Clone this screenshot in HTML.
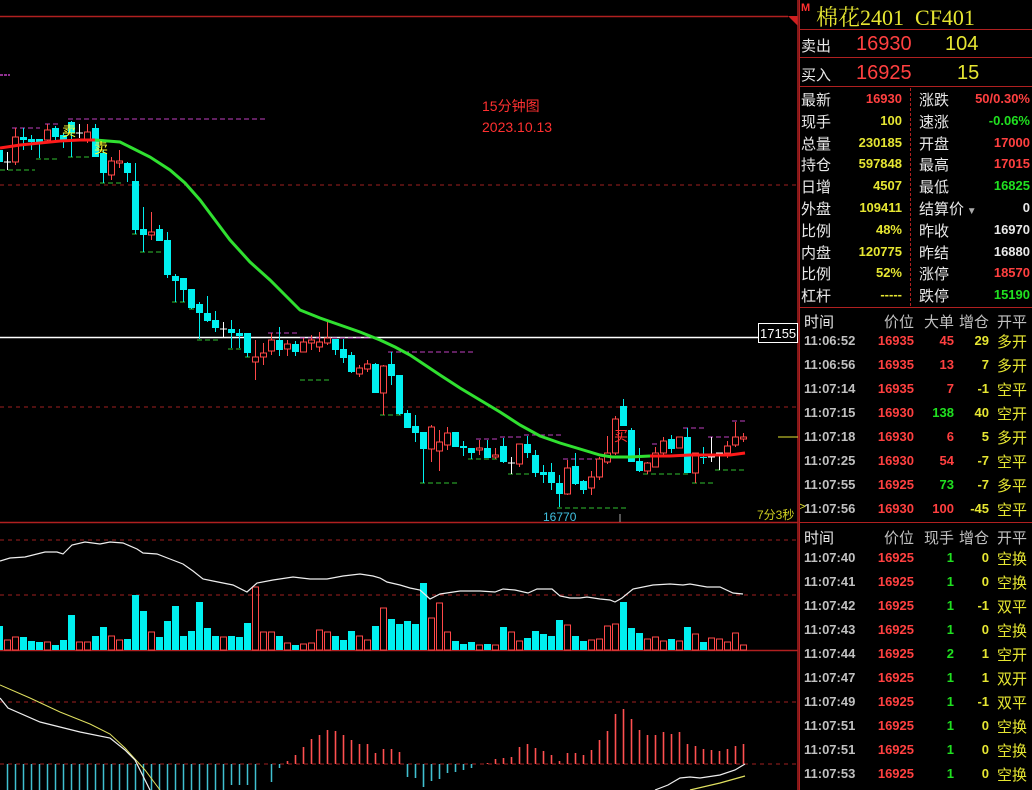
<!DOCTYPE html>
<html><head><meta charset="utf-8"><style>
*{margin:0;padding:0;box-sizing:border-box}
body{width:1032px;height:790px;background:#000;overflow:hidden;position:relative;font-family:"Liberation Sans","Noto Sans CJK SC",sans-serif}
#chart{position:absolute;left:0;top:0}
#rp{position:absolute;left:799px;top:0;width:233px;height:790px;color:#fff}
.t{position:absolute;white-space:nowrap}
.hl{position:absolute;left:0;width:233px;height:1px;background:#b02020}
.lab{font-size:15px;color:#e8e8e8}
.v{font-size:13px;font-weight:bold;text-align:right}
.y{color:#e6e632}.r{color:#ff4040}.g{color:#20e020}.w{color:#e8e8e8}.gr{color:#c0c0c0}
</style></head><body>
<svg id="chart" width="799" height="790" xmlns="http://www.w3.org/2000/svg"></svg>
<div id="rp">
<div class="t" style="left:2px;top:2px;color:#ff3030;font-size:11px;font-weight:bold">M</div>
<div class="t" style="left:17px;top:1px;color:#e6e632;font-size:22px;font-family:'Liberation Serif','Noto Serif CJK SC',serif">棉花2401&nbsp; CF401</div>
<div class="hl" style="top:29px"></div>
<div class="t lab" style="left:2px;top:35px">卖出</div>
<div class="t r" style="left:57px;top:33px;font-size:20px">16930</div>
<div class="t y" style="left:146px;top:33px;font-size:20px">104</div>
<div class="hl" style="top:57px"></div>
<div class="t lab" style="left:2px;top:64px">买入</div>
<div class="t r" style="left:57px;top:62px;font-size:20px">16925</div>
<div class="t y" style="left:158px;top:62px;font-size:20px">15</div>
<div class="hl" style="top:86px"></div>
<div style="position:absolute;left:111px;top:88px;height:218px;border-left:1px dashed #b02020"></div>
<div class="hl" style="top:307px"></div>
<div id="info"></div>
<div class="hl" style="top:522px"></div>
<div id="trades"></div>
<div style="position:absolute;left:0;top:0;width:1px;height:790px;background:#b02020"></div>
</div>
<script>
var S='';
function L(x1,y1,x2,y2,c,w,d){S+='<line x1="'+x1+'" y1="'+y1+'" x2="'+x2+'" y2="'+y2+'" stroke="'+c+'" stroke-width="'+(w||1)+'"'+(d?' stroke-dasharray="'+d+'"':'')+'/>';}
function P(pts,c,w){S+='<polyline fill="none" stroke="'+c+'" stroke-width="'+w+'" points="'+pts+'"/>';}
function T(x,y,t,c,s,a){S+='<text x="'+x+'" y="'+y+'" fill="'+c+'" font-size="'+s+'" font-family="Liberation Sans,Noto Sans CJK SC,sans-serif"'+(a?' text-anchor="'+a+'"':'')+'>'+t+'</text>';}
L(0,16.5,788,16.5,'#b02020',1.5);
S+='<polygon points="788,16 798,16 798,26" fill="#d02020"/>';
L(798,0,798,790,'#b02020',1.5);
L(0,522.5,798,522.5,'#b02020',1.5);
L(0,650.5,798,650.5,'#b02020',1.5);
L(0,185,798,185,'#a02020',1,'4,4');
L(0,407,798,407,'#a02020',1,'4,4');
L(0,540,798,540,'#a02020',1,'4,4');
L(0,595,798,595,'#a02020',1,'4,4');
L(0,702,798,702,'#a02020',1,'4,4');
L(0,764,798,764,'#a02020',1,'4,4');
L(0,75,10,75,'#c040c0',1.5,'3,1');
L(0,337.5,798,337.5,'#fff',1.5);
S+='<rect x="758.5" y="323.5" width="39" height="19" fill="#000" stroke="#fff"/>';
T(760,338,'17155','#fff',13);
L(778,437,798,437,'#e6e632',1);
var M='#c040c0',G='#30c030';
[[12,40,128],[45,60,124],[68,267,119],[268,300,333],[300,380,338],[388,475,352],[476,498,439],[500,523,437],[524,563,435],[563,597,459],[652,683,444],[683,707,428],[708,732,437],[732,747,421]].forEach(function(a){L(a[0],a[2],a[1],a[2],M,1,'5,3')});
[[0,35,170],[36,58,159],[68,90,157],[100,123,183],[132,138,234],[140,163,252],[172,187,302],[189,196,309],[197,218,340],[228,243,349],[245,250,357],[300,332,380],[380,403,415],[420,460,483],[468,500,459],[508,530,474],[557,627,508],[643,690,474],[692,715,483],[715,747,470]].forEach(function(a){L(a[0],a[2],a[1],a[2],G,1,'5,3')});
var C=[[150,162,150,162,'c'],[162,162,152,170,'w'],[137,162,128,165,'r'],[137,140,128,150,'c'],[139,142,135,150,'c'],[139,142,139,158,'c'],[130,140,124,143,'r'],[128,137,126,140,'c'],[135,140,133,148,'c'],[122,133,121,157,'c'],[133,133,124,138,'w'],[132,140,124,143,'r'],[128,157,124,157,'c'],[153,173,150,183,'c'],[161,175,157,180,'r'],[161,163,150,168,'r'],[163,173,162,182,'c'],[181,230,163,234,'c'],[229,235,207,252,'c'],[232,235,212,240,'r'],[229,241,225,241,'c'],[240,275,232,278,'c'],[276,281,274,302,'c'],[278,290,278,302,'c'],[289,308,289,309,'c'],[304,313,302,339,'c'],[313,321,296,322,'c'],[320,328,311,332,'c'],[329,329,322,338,'w'],[329,333,320,348,'c'],[333,336,329,348,'c'],[333,353,333,357,'c'],[357,362,340,380,'r'],[353,357,343,365,'r'],[340,351,333,355,'r'],[340,350,327,356,'c'],[344,349,340,356,'r'],[344,352,341,356,'c'],[342,352,338,352,'r'],[340,343,335,350,'r'],[342,347,332,352,'r'],[338,343,320,345,'r'],[339,350,339,355,'c'],[349,358,339,363,'c'],[355,372,352,373,'c'],[368,374,365,377,'r'],[364,369,360,372,'r'],[364,393,363,393,'c'],[366,393,365,415,'r'],[364,376,352,385,'c'],[375,414,375,415,'c'],[413,428,410,428,'c'],[426,433,415,442,'c'],[432,449,432,483,'c'],[427,449,425,462,'r'],[442,451,430,471,'r'],[433,445,427,450,'r'],[432,447,432,447,'c'],[446,448,441,456,'c'],[448,453,448,459,'c'],[448,450,440,455,'r'],[448,458,440,458,'c'],[455,457,448,459,'r'],[446,462,438,463,'c'],[463,463,457,474,'w'],[444,464,444,467,'r'],[444,453,436,458,'c'],[455,473,450,477,'c'],[472,475,465,483,'c'],[472,483,463,490,'c'],[483,494,475,507,'c'],[468,494,460,495,'r'],[466,484,453,485,'c'],[481,490,480,494,'c'],[477,488,471,495,'r'],[459,477,457,480,'r'],[453,462,436,464,'r'],[419,453,416,455,'r'],[406,426,399,426,'c'],[430,462,428,462,'c'],[461,471,448,472,'c'],[463,471,462,474,'r'],[453,467,447,467,'r'],[441,453,437,457,'r'],[439,449,435,453,'c'],[437,448,437,448,'r'],[437,473,428,473,'c'],[453,473,453,483,'r'],[457,458,447,464,'c'],[457,457,437,462,'w'],[453,453,453,470,'w'],[446,453,441,458,'r'],[437,445,422,447,'r'],[437,439,433,442,'r']];
C.forEach(function(k,j){var i=j-1,x=7.5+8*i;var col=k[4]=='c'?'#00f0f0':k[4]=='r'?'#ff4848':'#fff';
L(x,k[2],x,k[3],col,1);
if(k[4]=='c')S+='<rect x="'+(x-3.5)+'" y="'+k[0]+'" width="7" height="'+Math.max(1,k[1]-k[0])+'" fill="#00f0f0"/>';
else if(k[4]=='r')S+='<rect x="'+(x-3)+'" y="'+k[0]+'" width="6" height="'+Math.max(1,k[1]-k[0])+'" fill="#000" stroke="#ff4848"/>';
else L(x-3.5,k[0],x+3.5,k[0],'#fff',1);});
P('0,148 20,145 40,143 60,141 80,140 95,140','#ff1a1a',3);
P('95,140 120,142 130,147 150,157 170,170 185,183 200,200 215,220 230,240 250,262 270,280 285,295 300,310 320,318 340,325 360,332 380,340 395,347 410,355 425,365 440,375 460,388 480,400 500,412 520,425 540,436 560,443 580,449 600,455 612,457 630,457','#30e030',3);
P('630,457 650,456','#30e030',3);
P('650,456 670,456 690,455 710,455 730,455 745,453','#ff1a1a',3);
T(62,136,'卖','#ffff30',14);T(94,153,'卖','#ffff30',14);T(614,441,'买','#ff3030',14);
T(482,111,'15分钟图','#ff3030',14);T(482,132,'2023.10.13','#ff3030',14);
T(543,521,'16770','#40c0e0',12);T(757,519,'7分3秒','#d0d020',12);
L(620,514,620,522,'#aaa',1);
var V=[626,640,637,637,641,642,642,645,640,615,642,642,636,627,636,640,639,595,611,632,637,621,606,636,631,602,628,636,637,636,637,623,587,632,632,636,643,645,644,643,630,632,636,640,631,636,640,626,608,619,624,621,624,583,618,603,632,641,644,642,645,644,645,627,632,641,638,631,634,636,620,625,636,641,640,639,626,624,602,628,633,639,637,641,639,641,627,634,642,638,639,642,633,645];
var VR={1:1,2:1,6:1,10:1,11:1,14:1,15:1,19:1,28:1,32:1,33:1,34:1,36:1,38:1,39:1,40:1,41:1,45:1,46:1,48:1,54:1,55:1,56:1,60:1,62:1,64:1,65:1,71:1,74:1,75:1,76:1,77:1,81:1,82:1,83:1,85:1,87:1,89:1,90:1,91:1,92:1,93:1};
V.forEach(function(t,j){var x=4+8*(j-1);if(VR[j])S+='<rect x="'+(x+0.5)+'" y="'+t+'" width="6" height="'+(650-t)+'" fill="none" stroke="#ff4848"/>';else S+='<rect x="'+x+'" y="'+t+'" width="7" height="'+(650-t)+'" fill="#00f0f0"/>';});
P('0,561 10,558 25,557 45,552 57,552 63,554 72,545 85,542 100,544 110,542 123,543 137,549 143,553 157,554 170,559 183,564 193,571 203,579 213,581 233,585 247,592 257,583 273,580 293,577 310,579 327,579 343,576 360,574 373,576 380,578 387,582 400,585 410,588 420,590 430,599 440,594 460,591 480,591 495,592 503,589 515,590 528,593 537,589 552,589 560,596 570,598 580,598 587,597 600,599 610,600 615,602 622,598 633,589 653,585 670,584 683,585 690,584 707,587 720,587 733,593 743,594','#eee',1.2);
for(var x=7.5;x<=263;x+=8)L(x,764,x,(x>230&&x<250)?785:790,'#40c0d0',1.5);
L(271.5,764,271.5,782,'#40c0d0',1.5);L(279.5,764,279.5,768,'#40c0d0',1.5);
var RB=[[287,761],[295,755],[303,747],[311,739],[319,735],[327,730],[335,731],[343,735],[351,740],[359,744],[367,744],[375,753],[383,749],[391,749],[399,752]];
RB.forEach(function(a){L(a[0]+.5,764,a[0]+.5,a[1],'#ff5050',1.6)});
[[407,777],[415,778],[423,787],[431,781],[439,779],[447,773],[455,772],[463,770],[471,768]].forEach(function(a){L(a[0]+.5,764,a[0]+.5,a[1],'#40c0d0',1.6)});
[[487,763],[495,759],[503,758],[511,757],[519,747],[527,744],[535,748],[543,751],[551,755],[559,761],[567,753],[575,753],[583,755],[591,750],[599,740],[607,731],[615,714],[623,709],[631,719],[639,730],[647,735],[655,735],[663,732],[671,734],[679,732],[687,744],[695,746],[703,749],[711,750],[719,751],[727,749],[735,746],[743,744]].forEach(function(a){L(a[0]+.5,764,a[0]+.5,a[1],'#ff5050',1.6)});
P('0,685 30,698 60,712 90,724 110,734 125,748 145,770 160,790','#e0e060',1);
P('0,698 8,708 40,722 80,732 110,738 125,750 135,760 150,790','#eee',1.2);
P('655,790 668,785 680,778 690,777 700,778 720,775 735,770 745,764','#eee',1.2);
P('690,790 720,783 745,776','#e0e060',1.2);
document.getElementById('chart').innerHTML=S;
var I=[['最新','16930','r','涨跌','50/0.30%','r'],['现手','100','y','速涨','-0.06%','g'],['总量','230185','y','开盘','17000','r'],['持仓','597848','y','最高','17015','r'],['日增','4507','y','最低','16825','g'],['外盘','109411','y','结算价','0','w'],['比例','48%','y','昨收','16970','w'],['内盘','120775','y','昨结','16880','w'],['比例','52%','y','涨停','18570','r'],['杠杆','-----','y','跌停','15190','g']];
var h='';I.forEach(function(r,i){var y=89+i*21.8;
h+='<div class="t lab" style="left:2px;top:'+y+'px">'+r[0]+'</div><div class="t v '+r[2]+'" style="right:130px;top:'+(y+2)+'px">'+r[1]+'</div><div class="t lab" style="left:120px;top:'+y+'px">'+r[3]+(r[3]=='结算价'?'<span style="color:#aaa;font-size:10px"> ▼</span>':'')+'</div><div class="t v '+r[5]+'" style="right:2px;top:'+(y+2)+'px">'+r[4]+'</div>';});
document.getElementById('info').innerHTML=h;
function row(y,c,hd){return '<div class="t '+(hd?'lab':'v gr')+'" style="left:5px;top:'+y+'px">'+c[0]+'</div><div class="t '+(hd?'lab':'v')+' '+(hd?'gr':'r')+'" style="right:118px;top:'+y+'px">'+c[1]+'</div><div class="t '+(hd?'lab gr':'v '+c[5])+'" style="right:78px;top:'+y+'px">'+c[2]+'</div><div class="t '+(hd?'lab gr':'v y')+'" style="right:43px;top:'+y+'px">'+c[3]+'</div><div class="t lab '+(hd?'gr':'y')+'" style="left:198px;top:'+(hd?y:y-2)+'px">'+c[4]+'</div>';}
var A=[['11:06:52','16935','45','29','多开','r'],['11:06:56','16935','13','7','多开','r'],['11:07:14','16935','7','-1','空平','r'],['11:07:15','16930','138','40','空开','g'],['11:07:18','16930','6','5','多开','r'],['11:07:25','16930','54','-7','空平','r'],['11:07:55','16925','73','-7','多平','g'],['11:07:56','16930','100','-45','空平','r']];
var B=[['11:07:40','1','0','空换','g'],['11:07:41','1','0','空换','g'],['11:07:42','1','-1','双平','g'],['11:07:43','1','0','空换','g'],['11:07:44','2','1','空开','g'],['11:07:47','1','1','双开','g'],['11:07:49','1','-1','双平','g'],['11:07:51','1','0','空换','g'],['11:07:51','1','0','空换','g'],['11:07:53','1','0','空换','g']];
var t=row(311,['时间','价位','大单','增仓','开平'],1);
A.forEach(function(c,i){t+=row(333+i*24,c)});
t+='<div class="t" style="left:0;top:501px;color:#e6e632;font-size:11px">&gt;</div>';
t+=row(527,['时间','价位','现手','增仓','开平'],1);
B.forEach(function(c,i){t+=row(550+i*24,[c[0],'16925',c[1],c[2],c[3],c[4]])});
document.getElementById('trades').innerHTML=t;
</script>
</body></html>
